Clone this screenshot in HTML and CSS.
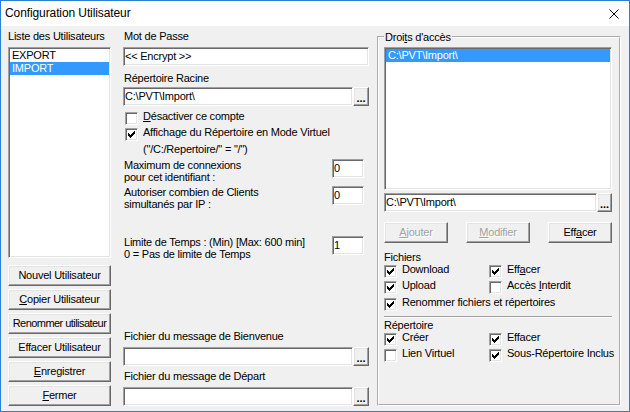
FILE: index.html
```html
<!DOCTYPE html>
<html lang="fr">
<head>
<meta charset="utf-8">
<title>Configuration Utilisateur</title>
<link rel="stylesheet" href="styles.css">
</head>
<body>
<div class="window">
  <div class="titlebar">
    <span class="title">Configuration Utilisateur</span>
    <svg class="close" viewBox="0 0 10 10" aria-label="Fermer"><path d="M0.5 0.5L9.5 9.5M9.5 0.5L0.5 9.5" stroke="#000" stroke-width="1" fill="none"/></svg>
  </div>
  <div class="dlg">
    <div class="col-users">
      <div class="lbl">Liste des Utilisateurs</div>
      <div class="sunken listbox users">
        <div class="item">EXPORT</div>
        <div class="item sel">IMPORT</div>
      </div>
      <div class="btn-stack">
        <button class="btn">Nouvel Utilisateur</button>
        <button class="btn"><span><u>C</u>opier Utilisateur</span></button>
        <button class="btn tight">Renommer utilisateur</button>
        <button class="btn">Effacer Utilisateur</button>
        <button class="btn"><span><u>E</u>nregistrer</span></button>
        <button class="btn"><span><u>F</u>ermer</span></button>
      </div>
    </div>

    <div class="col-mid">
      <div class="lbl">Mot de Passe</div>
      <div class="sunken edit pw">&lt;&lt; Encrypt &gt;&gt;</div>
      <div class="lbl lbl-root">Répertoire Racine</div>
      <div class="pathrow root">
        <div class="sunken edit grow">C:\PVT\Import\</div>
        <button class="btn dots">...</button>
      </div>
      <div class="cbrows">
        <div class="cbrow"><span class="cb"></span><span><u>D</u>ésactiver ce compte</span></div>
        <div class="cbrow"><span class="cb"><svg class="chk"><use href="#chk"/></svg></span><span>Affichage du Répertoire en Mode Virtuel</span></div>
        <div class="cbrow note">("/C:/Repertoire/" = "/")</div>
      </div>
      <div class="numrow">
        <div class="numlbl">Maximum de connexions<br>pour cet identifiant :</div>
        <div class="sunken edit num">0</div>
      </div>
      <div class="numrow r2">
        <div class="numlbl">Autoriser combien de Clients<br>simultanés par IP :</div>
        <div class="sunken edit num">0</div>
      </div>
      <div class="numrow r3">
        <div class="numlbl">Limite de Temps : (Min) [Max: 600 min]<br>0 = Pas de limite de Temps</div>
        <div class="sunken edit num">1</div>
      </div>
      <div class="msgs">
        <div class="lbl">Fichier du message de Bienvenue</div>
        <div class="pathrow msg">
          <div class="sunken edit grow"></div>
          <button class="btn dots">...</button>
        </div>
        <div class="lbl lbl-dep">Fichier du message de Départ</div>
        <div class="pathrow msg">
          <div class="sunken edit grow"></div>
          <button class="btn dots">...</button>
        </div>
      </div>
    </div>

    <fieldset class="group">
      <legend>Droi<u>t</u>s d'accès</legend>
      <div class="sunken listbox rights">
        <div class="item sel">C:\PVT\Import\</div>
      </div>
      <div class="pathrow rpath">
        <div class="sunken edit grow">C:\PVT\Import\</div>
        <button class="btn dots">...</button>
      </div>
      <div class="actions">
        <button class="btn act disabled"><span><u>A</u>jouter</span></button>
        <button class="btn act disabled"><span><u>M</u>odifier</span></button>
        <button class="btn act"><span>Eff<u>a</u>cer</span></button>
      </div>
      <div class="glbl files">Fichiers</div>
      <div class="cbgrid">
        <div class="cbrow"><span class="cb"><svg class="chk"><use href="#chk"/></svg></span><span>Download</span></div>
        <div class="cbrow"><span class="cb"><svg class="chk"><use href="#chk"/></svg></span><span>Eff<u>a</u>cer</span></div>
        <div class="cbrow"><span class="cb"><svg class="chk"><use href="#chk"/></svg></span><span>Upload</span></div>
        <div class="cbrow"><span class="cb"></span><span>Accès <u>I</u>nterdit</span></div>
        <div class="cbrow wide"><span class="cb"><svg class="chk"><use href="#chk"/></svg></span><span>Renommer fichiers et répertoires</span></div>
      </div>
      <div class="sep"></div>
      <div class="glbl dirs">Répertoire</div>
      <div class="cbgrid">
        <div class="cbrow"><span class="cb"><svg class="chk"><use href="#chk"/></svg></span><span>Créer</span></div>
        <div class="cbrow"><span class="cb"><svg class="chk"><use href="#chk"/></svg></span><span>Effacer</span></div>
        <div class="cbrow"><span class="cb"></span><span>Lien Virtuel</span></div>
        <div class="cbrow"><span class="cb"><svg class="chk"><use href="#chk"/></svg></span><span>Sous-Répertoire Inclus</span></div>
      </div>
    </fieldset>
  </div>
</div>
<svg class="defs" width="0" height="0" aria-hidden="true">
  <symbol id="chk" viewBox="0 0 7 7">
    <path d="M6 0h1v3h-1zM5 1h1v3h-1zM4 2h1v3h-1zM3 3h1v3h-1zM2 4h1v3h-1zM1 3h1v3h-1zM0 2h1v3h-1z" fill="#000"/>
  </symbol>
</svg>
</body>
</html>
```

FILE: styles.css
```css
* { box-sizing: border-box; }
html, body { margin: 0; padding: 0; }
body {
  background: #f0f0f0;
  font-family: "Liberation Sans", Arial, sans-serif;
  font-size: 11px;
  line-height: 13px;
  letter-spacing: -0.22px;
  color: #000;
}
u { text-decoration: underline; text-underline-offset: 1px; }
.defs { display: block; width: 0; height: 0; overflow: hidden; }

.window {
  width: 630px;
  height: 412px;
  border: 1px solid #2b7fd4;
  background: #f0f0f0;
  display: flex;
  flex-direction: column;
}
.titlebar {
  flex: none;
  height: 25px;
  background: #fff;
  display: flex;
  align-items: center;
  justify-content: space-between;
  padding: 0 10px 0 4px;
}
.title {
  font-family: "Segoe UI", "Liberation Sans", Arial, sans-serif;
  font-size: 12px;
  letter-spacing: -0.1px;
}
.close { display: block; width: 10px; height: 10px; }

.dlg {
  flex: 1;
  min-height: 0;
  display: flex;
  padding: 4px 0 5px 7px;
}

/* shared controls */
.lbl { height: 13px; white-space: nowrap; }
.sunken {
  background: #fff;
  border: 1px solid;
  border-color: #a0a0a0 #fff #fff #a0a0a0;
  box-shadow: inset 1px 1px 0 #696969, inset -1px -1px 0 #e3e3e3;
}
.listbox { padding: 1px; overflow: hidden; }
.item { height: 13px; padding-left: 2px; white-space: nowrap; }
.item.sel { background: #3399ff; color: #fff; }
.edit {
  height: 19px;
  padding: 2px 1px 0;
  white-space: nowrap;
  overflow: hidden;
}
.btn {
  display: flex;
  align-items: center;
  justify-content: center;
  height: 21px;
  padding: 0;
  background: #f0f0f0;
  border: 1px solid;
  border-color: #fff #696969 #696969 #fff;
  box-shadow: inset -1px -1px 0 #a0a0a0, inset 1px 1px 0 #e3e3e3;
  font: inherit;
  letter-spacing: inherit;
  color: #000;
  white-space: nowrap;
}
.btn.tight { letter-spacing: -0.55px; }
.btn.disabled { color: #a0a0a0; text-shadow: 1px 1px 0 #fff; }
.pathrow { display: flex; }
.grow { flex: 1; min-width: 0; }
.btn.dots {
  flex: none;
  width: 16px;
  height: 19px;
  font-weight: bold;
  line-height: 11px;
  align-items: flex-end;
  padding-bottom: 1px;
  letter-spacing: 0;
}

/* checkboxes */
.cbrow { display: flex; align-items: flex-start; height: 16.25px; white-space: nowrap; }
.cb {
  flex: none;
  display: block;
  width: 13px;
  height: 13px;
  margin: 2px 5px 0 0;
  background: #fff;
  border: 1px solid;
  border-color: #a0a0a0 #fff #fff #a0a0a0;
  box-shadow: inset 1px 1px 0 #696969, inset -1px -1px 0 #e3e3e3;
}
.chk { display: block; width: 7px; height: 7px; margin: 2px; }

/* left column */
.col-users {
  flex: none;
  width: 103px;
  margin-right: 12px;
  display: flex;
  flex-direction: column;
}
.users { flex: 1; margin-top: 4px; }
.btn-stack { display: flex; flex-direction: column; gap: 3px; margin-top: 7px; }

/* middle column */
.col-mid {
  flex: none;
  width: 246px;
  margin-right: 8px;
  display: flex;
  flex-direction: column;
}
.col-mid .lbl { padding-left: 1px; }
.pw { margin-top: 4px; }
.lbl-root { margin-top: 6px; }
.root { margin-top: 2px; }
.cbrows { margin-top: 4px; padding-left: 2px; }
.note { padding-left: 18px; }
.numrow {
  display: flex;
  justify-content: space-between;
  align-items: flex-start;
  height: 24px;
  padding-left: 1px;
}
.numrow.r2 { margin-top: 3px; }
.numrow.r3 { margin-top: 26px; }
.numlbl { line-height: 12px; white-space: nowrap; }
.num { width: 32px; margin-right: 5px; }
.msgs { margin-top: auto; }
.msg { margin-top: 4px; }
.lbl-dep { margin-top: 4px; }

/* right group */
.group {
  flex: none;
  width: 244px;
  margin: 0;
  padding: 3px 7px 0 5px;
  border: 2px groove #fff;
  display: flex;
  flex-direction: column;
  min-width: 0;
}
.group legend {
  padding: 0 1px;
  line-height: 14px;
  height: 14px;
}
.rights { height: 143px; flex: none; }
.rpath { margin-top: 3px; }
.rpath .dots { width: 15px; }
.actions { display: flex; justify-content: space-between; margin-top: 10px; }
.act { width: 64px; }
.glbl { height: 12px; white-space: nowrap; }
.files { margin-top: 8px; }
.cbgrid { display: grid; grid-template-columns: 105px 1fr; grid-auto-rows: 16.25px; }
.cbgrid .cbrow { height: auto; }
.cbgrid .wide { grid-column: 1 / span 2; }
.sep { height: 2px; margin-top: 4px; border-top: 1px solid #a0a0a0; border-bottom: 1px solid #fff; }
.dirs { margin-top: 1.25px; }
```
